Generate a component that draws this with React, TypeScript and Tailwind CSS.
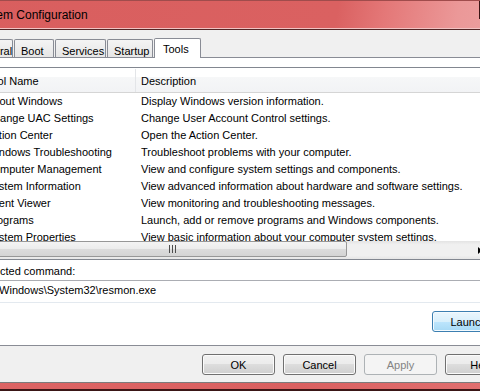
import type { ReactNode } from 'react';

const tools: [string, string][] = [
  ['About Windows', 'Display Windows version information.'],
  ['Change UAC Settings', 'Change User Account Control settings.'],
  ['Action Center', 'Open the Action Center.'],
  ['Windows Troubleshooting', 'Troubleshoot problems with your computer.'],
  ['Computer Management', 'View and configure system settings and components.'],
  ['System Information', 'View advanced information about hardware and software settings.'],
  ['Event Viewer', 'View monitoring and troubleshooting messages.'],
  ['Programs', 'Launch, add or remove programs and Windows components.'],
  ['System Properties', 'View basic information about your computer system settings.'],
];

function Tab({ label, className }: { label: string; className: string }) {
  return (
    <div
      className={`h-[18px] mr-px pl-[6px] pt-[4px] leading-[14px] whitespace-nowrap rounded-t-[2px] border border-b-0 border-[#898c95] bg-[linear-gradient(#f4f4f4,#e6e6e6)] ${className}`}
    >
      {label}
    </div>
  );
}

function Button({ children, variant = 'normal' }: { children: ReactNode; variant?: 'normal' | 'default' | 'disabled' }) {
  const look =
    variant === 'default'
      ? 'border-[#3c7fb1] bg-[linear-gradient(#eaf6fd_0%,#d9f0fc_50%,#bee6fd_50%,#a7d9f5_100%)] shadow-[inset_0_0_0_1px_#f4fbff]'
      : variant === 'disabled'
        ? 'border-[#adb2b5] bg-[#f4f4f4] text-[#838383]'
        : 'border-[#707070] bg-[linear-gradient(#f2f2f2_0%,#ebebeb_50%,#dddddd_50%,#cfcfcf_100%)] shadow-[inset_0_0_0_1px_#fbfbfb]';
  return (
    <div className={`w-[73px] h-[21px] shrink-0 rounded-[3px] border flex items-center justify-center leading-[14px] ${look}`}>
      {children}
    </div>
  );
}

export default function App() {
  return (
    <div className="w-[480px] h-[391px] overflow-hidden bg-[#f0f0f0] text-[11px] text-black font-['Liberation_Sans',Arial,sans-serif]">
      {/* window, wider than the shot and shifted left */}
      <div className="w-[600px] -ml-[60px] h-full flex flex-col">
        {/* Title bar */}
        <div className="relative h-[28px] shrink-0 border-t border-[#a04c4c] bg-[linear-gradient(100deg,#d95e5e_0%,#da6161_66%,#e47878_74%,#eb9898_86%,#eda6a6_100%)] flex items-center pt-[1px]">
          <span className="ml-[33px] text-[12px] whitespace-nowrap">System Configuration</span>
          <div className="absolute top-0 right-[60px] w-px h-[18px] bg-[#3a1414]" />
        </div>
        <div className="h-px shrink-0 bg-[#f2c3c3]" />
        <div className="h-px shrink-0 bg-[#532626]" />

        {/* Tabs */}
        <div className="h-[27px] shrink-0 flex items-end pl-[26px]">
          <Tab label="General" className="w-[47px]" />
          <Tab label="Boot" className="w-[40px]" />
          <Tab label="Services" className="w-[51px]" />
          <Tab label="Startup" className="w-[46px]" />
          <div className="relative z-10 w-[47px] h-[20px] -mb-px pl-[8px] pt-[3px] leading-[14px] rounded-t-[2px] border border-b-0 border-[#898c95] bg-white">
            Tools
          </div>
        </div>

        {/* Tab page */}
        <div className="h-[289px] shrink-0 ml-[24px] w-[552px] border border-[#898c95] bg-white pl-[14px] pr-[10px] pt-[9px] flex flex-col">
          {/* List view */}
          <div className="w-[510px] h-[193px] shrink-0 border border-[#828790] flex flex-col">
            <div className="h-[25px] shrink-0 flex border-b border-[#d5d5d5] bg-[linear-gradient(#ffffff_0%,#ffffff_38%,#f6f7f8_38%,#f2f3f5_100%)] leading-[14px] pt-[1px]">
              <div className="w-[156px] shrink-0 border-r border-[#e3e5e8] pl-[6px] flex items-center whitespace-nowrap">Tool Name</div>
              <div className="flex-1 pl-[5px] flex items-center">Description</div>
            </div>
            <div className="h-[148px] shrink-0 overflow-hidden">
              {tools.map(([name, desc]) => (
                <div key={name} className="h-[17px] flex leading-[17px] whitespace-nowrap">
                  <div className="w-[156px] shrink-0 pl-[6px] overflow-hidden">{name}</div>
                  <div className="pl-[5px]">{desc}</div>
                </div>
              ))}
            </div>
            {/* Horizontal scrollbar */}
            <div className="h-[18px] shrink-0 flex bg-[linear-gradient(#e3e3e3,#f0f0f0_20%,#f0f0f0_80%,#e6e6e6)]">
              <div className="w-[17px] shrink-0" />
              <div className="w-[350px] shrink-0 h-[16px] rounded-[2px] border border-[#979797] bg-[linear-gradient(#f4f4f4_0%,#ececec_50%,#dcdcdc_50%,#d4d4d4_100%)] flex items-center justify-center">
                <svg width="7" height="8" viewBox="0 0 7 8">
                  <path d="M0.5 0v8M3.5 0v8M6.5 0v8" stroke="#4d4d4d" strokeWidth="1" />
                </svg>
              </div>
              <div className="flex-1" />
              <div className="w-[17px] shrink-0 flex items-center justify-center">
                <svg width="4" height="7" viewBox="0 0 4 7">
                  <path d="M0 0L4 3.5L0 7Z" fill="#000" />
                </svg>
              </div>
            </div>
          </div>

          <div className="mt-[4px] -ml-px leading-[14px] whitespace-nowrap">Selected command:</div>
          <div className="mt-[2px] w-[510px] h-[23px] shrink-0 border border-t-[#abadb3] border-l-[#e2e3ea] border-r-[#dbdfe6] border-b-[#e3e9ef] pl-[5px] pt-[2px] leading-[14px] whitespace-nowrap">
            C:\Windows\System32\resmon.exe
          </div>
          <div className="mt-[8px] flex justify-end">
            <Button variant="default">Launch</Button>
          </div>
        </div>

        {/* Dialog buttons */}
        <div className="h-[36px] shrink-0 pt-[8px] pr-[22px] flex justify-end items-start gap-[8px]">
          <Button>OK</Button>
          <Button>Cancel</Button>
          <Button variant="disabled">Apply</Button>
          <Button>Help</Button>
        </div>

        {/* Bottom frame */}
        <div className="h-px shrink-0 bg-[#7b7b7b]" />
        <div className="h-[6px] shrink-0 bg-[linear-gradient(90deg,#dd6464,#da6060_60%,#e37474)]" />
        <div className="flex-1 bg-[#3a1616]" />
      </div>
    </div>
  );
}
